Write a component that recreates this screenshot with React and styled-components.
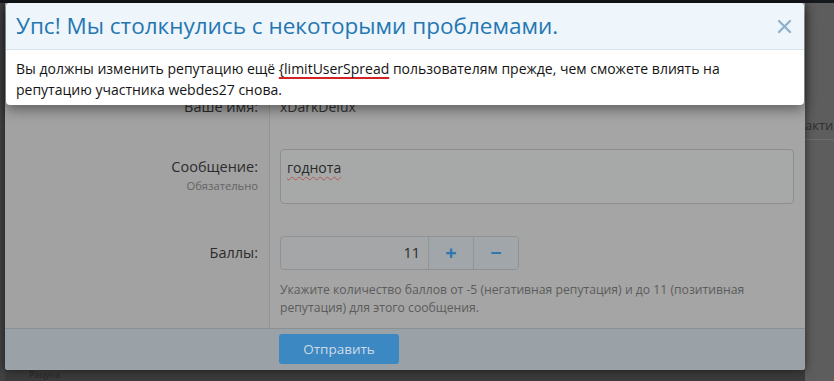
import React from 'react';
import styled, { createGlobalStyle } from 'styled-components';

const GlobalStyle = createGlobalStyle`
  body {
    margin: 0;
    background: #3b3b3b;
    font-family: "Open Sans", "Noto Sans", sans-serif;
  }
`;

const App = () => {
  return (
    <>
      <GlobalStyle />
      <Screen>
        <TopBar />
        <Stage>
          <LeftEdge />
          <CenterColumn>
            <FormDialog>
              <FormHeader />
              <FormBody>
                <FormRow>
                  <RowLabel>Ваше имя:</RowLabel>
                  <RowInput>
                    <PlainValue>xDarkDelux</PlainValue>
                  </RowInput>
                </FormRow>
                <FormRow $labelShift={8}>
                  <RowLabel>
                    Сообщение:
                    <LabelHint>Обязательно</LabelHint>
                  </RowLabel>
                  <RowInput>
                    <TextArea>
                      <Misspelled>годнота</Misspelled>
                    </TextArea>
                  </RowInput>
                </FormRow>
                <FormRow $labelShift={7} $last>
                  <RowLabel>Баллы:</RowLabel>
                  <RowInput>
                    <NumberBox>
                      <NumberValue>11</NumberValue>
                      <StepButton>+</StepButton>
                      <StepButton>−</StepButton>
                    </NumberBox>
                    <Explain>
                      Укажите количество баллов от -5 (негативная репутация) и до 11 (позитивная
                      репутация) для этого сообщения.
                    </Explain>
                  </RowInput>
                </FormRow>
              </FormBody>
              <FormFooter>
                <SubmitButton>Отправить</SubmitButton>
              </FormFooter>
            </FormDialog>
            <PageBelow>Рацуна</PageBelow>
          </CenterColumn>
          <SidePanel>
            <SideItem>акти</SideItem>
          </SidePanel>
        </Stage>

        <ErrorDialog>
          <ErrorHeader>
            <ErrorTitle>Упс! Мы столкнулись с некоторыми проблемами.</ErrorTitle>
            <CloseButton aria-label="Закрыть">
              <svg width="15" height="15" viewBox="0 0 15 15">
                <path d="M2 2 L13 13 M13 2 L2 13" stroke="#8fb2cc" strokeWidth="2.4" strokeLinecap="round" />
              </svg>
            </CloseButton>
          </ErrorHeader>
          <ErrorBody>
            Вы должны изменить репутацию ещё <Marked>{'{limitUserSpread'}</Marked> пользователям прежде, чем сможете влиять на
            репутацию участника webdes27 снова.
          </ErrorBody>
        </ErrorDialog>
      </Screen>
    </>
  );
};

const Screen = styled.div`
  position: relative;
  width: 834px;
  height: 381px;
  overflow: hidden;
  background: #3b3b3b;
  display: flex;
  flex-direction: column;
`;

const TopBar = styled.div`
  height: 3px;
  background: #161a1f;
  flex-shrink: 0;
`;

const Stage = styled.div`
  flex: 1;
  display: flex;
  align-items: stretch;
  min-height: 0;
`;

const LeftEdge = styled.div`
  width: 5px;
  background: #424242;
`;

const CenterColumn = styled.div`
  width: 800px;
  display: flex;
  flex-direction: column;
`;

const FormDialog = styled.div`
  background: #a4a4a4;
  border-radius: 0 0 3px 3px;
  box-shadow: 0 0 10px rgba(0, 0, 0, 0.55);
  display: flex;
  flex-direction: column;
  position: relative;
  z-index: 1;
`;

const FormHeader = styled.div`
  height: 78px;
  background: #9fa6ab;
`;

const FormBody = styled.div`
  display: flex;
  flex-direction: column;
`;

const FormRow = styled.div`
  display: grid;
  grid-template-columns: 264px 1fr;

  & > * {
    padding-top: 16px;
    padding-bottom: ${p => (p.$last ? '11px' : '16px')};
  }
  & > *:first-child {
    padding-top: ${p => 16 + (p.$labelShift || 0)}px;
  }
`;

const RowLabel = styled.div`
  box-sizing: border-box;
  background: #a2a2a2;
  padding-right: 11px;
  text-align: right;
  font-size: 14.5px;
  line-height: 20px;
  color: #2c2c2c;
`;

const LabelHint = styled.div`
  font-size: 11.2px;
  line-height: 18px;
  color: #646464;
`;

const RowInput = styled.div`
  border-left: 1px solid #959595;
  padding-left: 10px;
  padding-right: 11px;
  background: #a5a5a5;
`;

const PlainValue = styled.div`
  font-size: 14px;
  line-height: 20px;
  color: #333;
`;

const TextArea = styled.div`
  box-sizing: border-box;
  height: 55px;
  padding: 8px 6px;
  border: 1px solid #8e8e8e;
  border-radius: 4px;
  background: #a7a8a8;
  font-size: 14px;
  line-height: 20px;
  color: #2a2a2a;
`;

const Misspelled = styled.span`
  text-decoration: underline wavy #b05656;
  text-decoration-thickness: 1px;
  text-underline-offset: 3px;
`;

const NumberBox = styled.div`
  box-sizing: border-box;
  width: 239px;
  height: 34px;
  display: flex;
  border: 1px solid #8f9294;
  border-radius: 4px;
  overflow: hidden;
  background: #a5a6a7;
`;

const NumberValue = styled.div`
  flex: 1;
  text-align: right;
  padding-right: 8px;
  font-size: 14.5px;
  line-height: 32px;
  color: #2c2c2c;
`;

const StepButton = styled.div`
  width: 44px;
  border-left: 1px solid #929597;
  background: #a0a6aa;
  color: #2e78ae;
  font-size: 20px;
  font-weight: 700;
  line-height: 31px;
  text-align: center;
`;

const Explain = styled.div`
  margin-top: 11px;
  font-size: 12.2px;
  line-height: 18px;
  color: #5c5c5c;
`;

const FormFooter = styled.div`
  border-top: 1px solid #8b9094;
  background: #9ba2a7;
  padding: 5px 0 6px 274px;
  border-radius: 0 0 3px 3px;
`;

const SubmitButton = styled.div`
  width: 120px;
  height: 30px;
  border-radius: 3px;
  background: #3b88c3;
  color: #cfdce6;
  font-size: 13.5px;
  line-height: 30px;
  text-align: center;
`;

const PageBelow = styled.div`
  padding: 0 0 0 24px;
  font-size: 9px;
  line-height: 10px;
  color: #262626;
`;

const SidePanel = styled.div`
  flex: 1;
  background: #5d5d5d;
  padding-top: 114px;
  overflow: hidden;
`;

const SideItem = styled.div`
  font-size: 13px;
  line-height: 16px;
  color: #2f2f2f;
  padding-bottom: 6px;
  border-bottom: 1px solid #6c6c6c;
  white-space: nowrap;
`;

const ErrorDialog = styled.div`
  position: absolute;
  left: 6px;
  top: 3px;
  width: 798px;
  z-index: 5;
  background: #fff;
  border-radius: 4px;
  box-shadow: 0 4px 14px rgba(0, 0, 0, 0.45);
  overflow: hidden;
`;

const ErrorHeader = styled.div`
  height: 47px;
  box-sizing: border-box;
  display: flex;
  align-items: center;
  justify-content: space-between;
  padding: 0 12px 0 10px;
  background: #eef5fb;
  border-bottom: 1px solid #d6e2ec;
`;

const ErrorTitle = styled.div`
  font-size: 22.5px;
  line-height: 30px;
  color: #2577b1;
`;

const CloseButton = styled.div`
  display: flex;
  align-items: center;
  justify-content: center;
  width: 16px;
  height: 16px;
`;

const ErrorBody = styled.div`
  padding: 8px 10px 5px;
  font-size: 14px;
  line-height: 21px;
  color: #141414;
`;

const Marked = styled.span`
  text-decoration: underline;
  text-decoration-color: #d42222;
  text-decoration-thickness: 2px;
  text-underline-offset: 3px;
`;

export default App;
